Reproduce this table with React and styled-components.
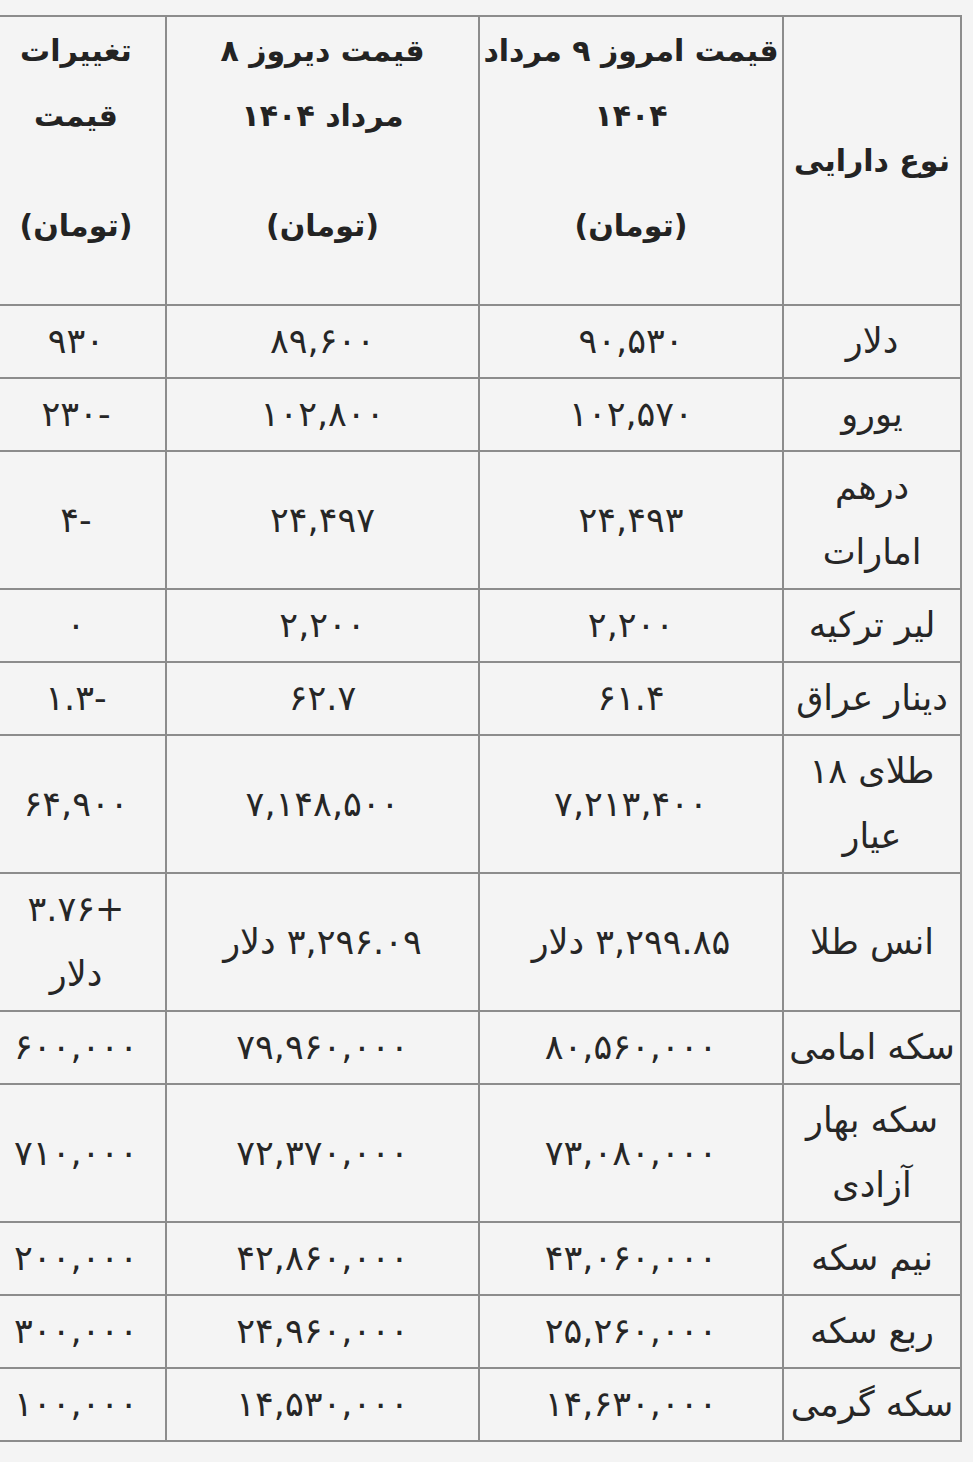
import React from "react";
import styled, { createGlobalStyle } from "styled-components";

const GlobalStyle = createGlobalStyle`
  html, body {
    margin: 0;
    padding: 0;
    background: #f4f4f4;
  }
  body {
    font-family: "DejaVu Sans", "Noto Sans", sans-serif;
    color: #222;
  }
`;

const Page = styled.div`
  width: 973px;
  min-height: 1462px;
  overflow: hidden;
  background: #f4f4f4;
  direction: rtl;
  padding-top: 15px;
  box-sizing: border-box;
`;

const Table = styled.table`
  width: 975px;
  margin-right: 11px;
  border-collapse: collapse;
  table-layout: fixed;
  direction: rtl;
`;

const Col = styled.col`
  width: ${(p) => p.$w}px;
`;

const HeadCell = styled.th`
  border: 2px solid #8c8c8c;
  padding: ${(p) => (p.$middle ? "0" : "1px 0 46px")};
  vertical-align: ${(p) => (p.$middle ? "middle" : "top")};
  font-size: 30px;
  font-weight: 700;
  line-height: 65px;
  text-align: center;
  white-space: nowrap;
  color: #232323;
`;

const Unit = styled.div`
  margin-top: 45px;
`;

const Cell = styled.td`
  border: 2px solid #8c8c8c;
  padding: 3px 0;
  vertical-align: middle;
  font-size: 35px;
  font-weight: 400;
  line-height: 65px;
  text-align: center;
  white-space: nowrap;
  color: #262626;
`;

const rows = [
  [["دلار"], "۹۰,۵۳۰", "۸۹,۶۰۰", ["۹۳۰"]],
  [["یورو"], "۱۰۲,۵۷۰", "۱۰۲,۸۰۰", ["-۲۳۰"]],
  [["درهم", "امارات"], "۲۴,۴۹۳", "۲۴,۴۹۷", ["-۴"]],
  [["لیر ترکیه"], "۲,۲۰۰", "۲,۲۰۰", ["۰"]],
  [["دینار عراق"], "۶۱.۴", "۶۲.۷", ["-۱.۳"]],
  [["طلای ۱۸", "عیار"], "۷,۲۱۳,۴۰۰", "۷,۱۴۸,۵۰۰", ["۶۴,۹۰۰"]],
  [["انس طلا"], "۳,۲۹۹.۸۵ دلار", "۳,۲۹۶.۰۹ دلار", ["+۳.۷۶", "دلار"]],
  [["سکه امامی"], "۸۰,۵۶۰,۰۰۰", "۷۹,۹۶۰,۰۰۰", ["۶۰۰,۰۰۰"]],
  [["سکه بهار", "آزادی"], "۷۳,۰۸۰,۰۰۰", "۷۲,۳۷۰,۰۰۰", ["۷۱۰,۰۰۰"]],
  [["نیم سکه"], "۴۳,۰۶۰,۰۰۰", "۴۲,۸۶۰,۰۰۰", ["۲۰۰,۰۰۰"]],
  [["ربع سکه"], "۲۵,۲۶۰,۰۰۰", "۲۴,۹۶۰,۰۰۰", ["۳۰۰,۰۰۰"]],
  [["سکه گرمی"], "۱۴,۶۳۰,۰۰۰", "۱۴,۵۳۰,۰۰۰", ["۱۰۰,۰۰۰"]],
];

const Lines = ({ lines }) =>
  lines.map((l, i) => (
    <React.Fragment key={i}>
      {i > 0 && <br />}
      {l}
    </React.Fragment>
  ));

export default function App() {
  return (
    <>
      <GlobalStyle />
      <Page>
        <Table>
          <colgroup>
            <Col $w={178} />
            <Col $w={304} />
            <Col $w={313} />
            <Col $w={180} />
          </colgroup>
          <thead>
            <tr>
              <HeadCell $middle>نوع دارایی</HeadCell>
              <HeadCell>
                قیمت امروز ۹ مرداد
                <br />
                ۱۴۰۴
                <Unit>(تومان)</Unit>
              </HeadCell>
              <HeadCell>
                قیمت دیروز ۸
                <br />
                مرداد ۱۴۰۴
                <Unit>(تومان)</Unit>
              </HeadCell>
              <HeadCell>
                تغییرات
                <br />
                قیمت
                <Unit>(تومان)</Unit>
              </HeadCell>
            </tr>
          </thead>
          <tbody>
            {rows.map((r, i) => (
              <tr key={i}>
                <Cell>
                  <Lines lines={r[0]} />
                </Cell>
                <Cell>{r[1]}</Cell>
                <Cell>{r[2]}</Cell>
                <Cell>
                  <Lines lines={r[3]} />
                </Cell>
              </tr>
            ))}
          </tbody>
        </Table>
      </Page>
    </>
  );
}
